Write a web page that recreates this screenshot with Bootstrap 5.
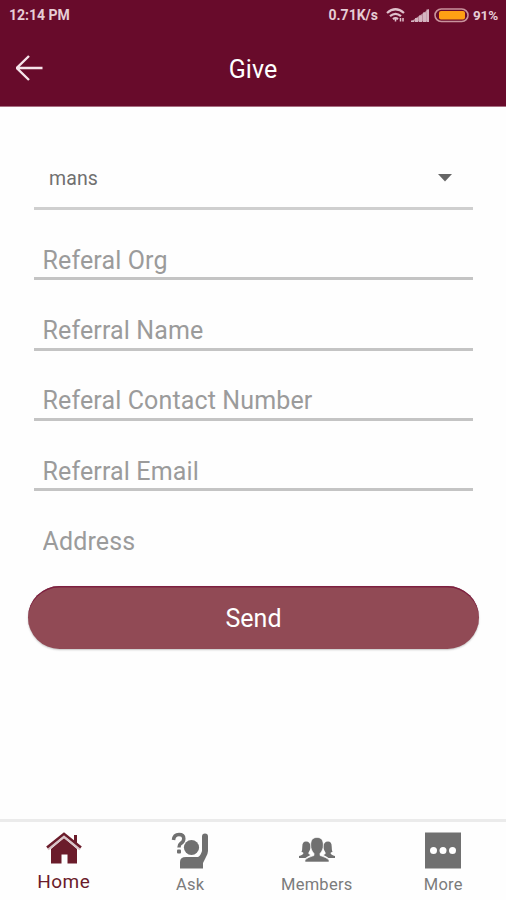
<!DOCTYPE html>
<html lang="en">
<head>
<meta charset="utf-8">
<meta name="viewport" content="width=device-width, initial-scale=1">
<title>Give</title>
<link href="https://cdn.jsdelivr.net/npm/bootstrap@5.3.0/dist/css/bootstrap.min.css" rel="stylesheet">
<style>
  body { font-family: Roboto, "Liberation Sans", sans-serif; height: 900px; background: #fefefe; overflow: hidden; }
  svg { display: block; flex: none; }
  .app-top { background: #680b2b; height: 107px; color: #fff; border-bottom: 1px solid #a86f82; }
  .status { height: 30px; padding: 0 8px 0 9px; font-size: 14px; font-weight: 700; color: #e6cdd5; line-height: 30px; }
  .status .tight { letter-spacing: -.15px; }
  .status .pct { font-size: 13.500px; }
  .titlebar { display: grid; grid-template-columns: 60px 1fr 60px; height: 76px; }
  .titlebar h1 { font-size: 25px; font-weight: 400; line-height: 30px; padding-top: 3px; }
  .give-form { padding: 41px 33px 0 34px; }
  .picker { height: 62px; border: 0; border-bottom: 3px solid #cfcfcf; padding: 0 21px 0 15px; font-size: 19.500px; letter-spacing: .1px; color: #707070; }
  .picker span { padding-top: 2px; }
  .line-input { height: 70.300px; border: 0; border-bottom: 3px solid #c4c4c4; border-radius: 0; padding: 33px 9px 0 8.500px; font-size: 25px; letter-spacing: .13px; line-height: 34px; background: none; color: #555; }
  .line-input::placeholder { color: #9b9b9b; opacity: 1; }
  .line-input:focus { box-shadow: none; background: none; }
  .line-input.last { border-color: transparent; }
  .send { margin: 25px -6px 0; height: 63px; border-radius: 32px; border: 0; background: #914a55; color: #fff; font-size: 25px; box-shadow: inset 0 1.500px 0 #7d2040, 0 1px 2px #c4c4c4; padding-top: 8px; }
  .send:hover { background: #86404b; color: #fff; }
  .tabs { height: 81px; border-top: 3px solid #ebebeb; background: #fefefe; }
  .tab { color: #7b7b7b; font-size: 16.500px; line-height: 20px; letter-spacing: .25px; padding: 10px 0 0 1px; text-decoration: none; }
  .tab.active { color: #6b1c2b; font-size: 19px; letter-spacing: .5px; }
  .tab .lbl { margin-top: 6px; }
</style>
<script src="https://cdn.jsdelivr.net/npm/bootstrap@5.3.0/dist/js/bootstrap.bundle.min.js"></script>
</head>
<body class="d-flex flex-column">
<header class="app-top flex-shrink-0">
  <div class="status d-flex align-items-center">
    <span class="me-auto">12:14 PM</span>
    <span>0.71K/s</span>
    <svg class="ms-2" width="20" height="16" viewBox="0 0 20 16" fill="none" stroke="#dfc0cb" stroke-width="2.200"><path d="M1 6Q9.500-1.500 18 6M4 9.200q5.500-4.500 11 0M7 12.200q2.500-2 5 0"/><path d="M9.500 12v2.500M14.500 11v3.500M17 11v3.500" stroke-width="1.500"/></svg>
    <svg class="ms-1 me-1" width="20" height="16" viewBox="0 0 20 16"><path fill="#b98a9a" d="M1 14.500 19 2v12.500z"/><path fill="#d4b4c0" d="M1 13.500h3V15H1zM5 11h3v4H5zM9 8.500h3V15H9zM13 5.500h3V15h-3zM16.500 2.500H19V15h-2.500z"/></svg>
    <svg class="me-1" width="35" height="16" viewBox="0 0 35 16"><rect x="1" y="2" width="33" height="12.500" rx="6.250" fill="none" stroke="#c9939d" stroke-width="1.600"/><rect x="5" y="4" width="26" height="8.500" rx="2" fill="#ffa014"/></svg>
    <span class="pct tight">91%</span>
  </div>
  <div class="titlebar align-items-center">
    <svg class="ms-3" width="28" height="26" viewBox="0 0 28 26" fill="none" stroke="#f6e4ea" stroke-width="2.400"><path d="M26.500 13H1M13 1 .8 13 13 25"/></svg>
    <h1 class="mb-0 text-center">Give</h1>
  </div>
</header>
<main class="flex-grow-1">
  <form class="give-form d-flex flex-column">
    <button type="button" class="picker bg-transparent d-flex justify-content-between align-items-center">
      <span>mans</span>
      <svg width="14" height="8" viewBox="0 0 14 8"><path fill="#666" d="M0 0h14L7 7.500z"/></svg>
    </button>
    <input class="form-control line-input" placeholder="Referal Org">
    <input class="form-control line-input" placeholder="Referral Name">
    <input class="form-control line-input" placeholder="Referal Contact Number">
    <input class="form-control line-input" placeholder="Referral Email">
    <input class="form-control line-input last" placeholder="Address">
    <button type="button" class="btn send">Send</button>
  </form>
</main>
<nav class="tabs row g-0 flex-shrink-0">
  <a href="#" class="tab active col d-flex flex-column align-items-center">
    <svg width="38" height="34" viewBox="0 0 38 34"><g fill="#6b1c2b"><path d="M29 3h3v9l-3-3z"/><path d="M6 17 19 6l13 11v14.500h-9.500v-9h-6v9H6z"/></g><path d="M3 17.500 19 5l16 12.500" fill="none" stroke="#d9c3c7" stroke-width="2"/><path d="M2 15.500 19 1.800l17 13.700" fill="none" stroke="#6b1c2b" stroke-width="2.600"/></svg>
    <span class="lbl">Home</span>
  </a>
  <a href="#" class="tab col d-flex flex-column align-items-center">
    <svg width="38" height="37" viewBox="0 0 38 37" fill="#707070"><path d="M2.500 8Q3 2.500 8 2.500q4.800 0 4.800 4.200 0 2.800-3 4.700Q8 12.700 8 15.500" fill="none" stroke="#707070" stroke-width="3.500"/><rect x="6" y="17.500" width="4" height="4" rx="1"/><circle cx="20.500" cy="15.500" r="7.600"/><path d="M31 4.500q0-3 3-3t3 3V19q0 3-2.500 7L32 31v5.500H9V30q0-5 6-5h12q2.500-1 4-6z"/></svg>
    <span class="lbl">Ask</span>
  </a>
  <a href="#" class="tab col d-flex flex-column align-items-center">
    <svg width="38" height="37" viewBox="0 0 38 37" fill="#707070"><path d="M8 9.500c3 0 4.500 2 4.500 5 0 3-1 4.500-2 6V22l2 1q-4 2-5 3H1v-2q4-1 4.500-3-.5-1-2-1 .8-2 .8-5.500 0-5 3.700-5z"/><path d="M30 9.500c-3 0-4.500 2-4.500 5 0 3 1 4.500 2 6V22l-2 1q4 2 5 3H37v-2q-4-1-4.500-3 .5-1 2-1-.8-2-.8-5.500 0-5-3.700-5z"/><path stroke="#fefefe" stroke-width=".6" d="M19 5.500c4.500 0 6.300 3 6.300 7.500 0 4-1.500 6.500-3.300 8.500v2q7 2 9 4.500v2H7v-2q2-2.500 9-4.500v-2c-1.800-2-3.300-4.500-3.300-8.500 0-4.500 1.800-7.500 6.300-7.500z"/></svg>
    <span class="lbl">Members</span>
  </a>
  <a href="#" class="tab col d-flex flex-column align-items-center">
    <svg width="38" height="37" viewBox="0 0 38 37"><rect x="1" y=".5" width="36" height="36" fill="#707070"/><g fill="#fff"><circle cx="9.500" cy="18.500" r="3.500"/><circle cx="19" cy="18.500" r="3.500"/><circle cx="28.500" cy="18.500" r="3.500"/></g></svg>
    <span class="lbl">More</span>
  </a>
</nav>
</body>
</html>
